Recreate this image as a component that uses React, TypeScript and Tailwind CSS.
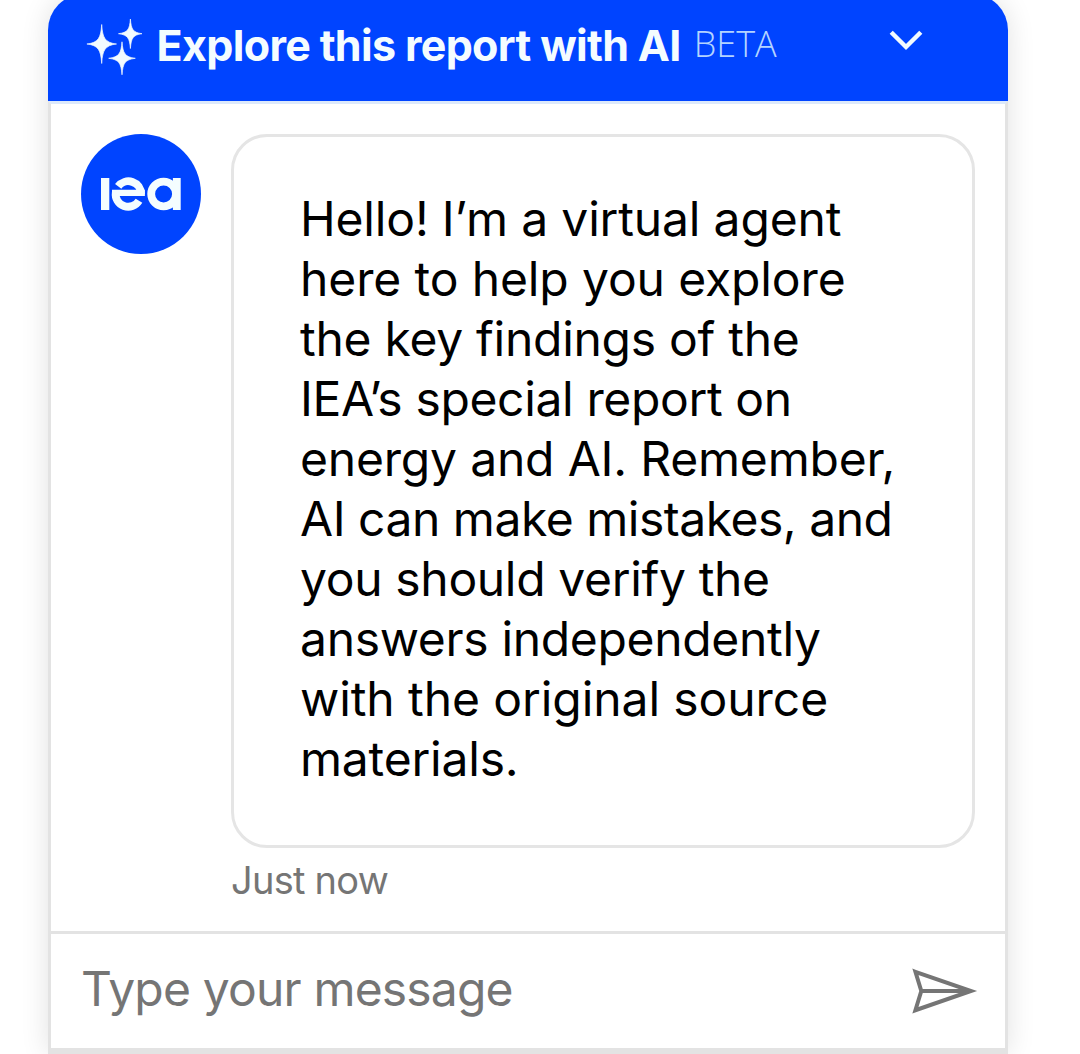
const messageLines = [
  { text: 'Hello! I’m a virtual agent', tracking: 'tracking-[-0.16px]' },
  { text: 'here to help you explore', tracking: 'tracking-[-0.12px]' },
  { text: 'the key findings of the', tracking: 'tracking-[-0.28px]' },
  { text: 'IEA’s special report on', tracking: 'tracking-[-0.36px]' },
  { text: 'energy and AI. Remember,', tracking: 'tracking-[-0.19px]' },
  { text: 'AI can make mistakes, and', tracking: 'tracking-[-0.48px]' },
  { text: 'you should verify the', tracking: 'tracking-[-0.34px]' },
  { text: 'answers independently', tracking: 'tracking-[-0.32px]' },
  { text: 'with the original source', tracking: 'tracking-[-0.08px]' },
  { text: 'materials.', tracking: 'tracking-[-0.2px]' },
];

function Sparkles() {
  return (
    <svg width="56" height="58" viewBox="86 17 56 58" fill="#f2fbff" aria-hidden="true">
      <g stroke="#f2fbff" strokeWidth="0.7">
        <path d="M101.7 24.5C102.6 38 105 42.6 116.5 44C105 45.4 102.6 50 101.7 63.5C100.8 50 98.4 45.4 86.9 44C98.4 42.6 100.8 38 101.7 24.5Z" />
        <path d="M130.4 19C131.2 29.5 133 32.5 142 33.7C133 34.9 131.2 38 130.4 48.5C129.6 38 127.8 34.9 118.5 33.7C127.8 32.5 129.6 29.5 130.4 19Z" />
        <path d="M122 41.8C122.9 53.5 125 57 135.3 58.3C125 59.6 122.9 63.1 122 74.8C121.1 63.1 119 59.6 108.7 58.3C119 57 121.1 53.5 122 41.8Z" />
      </g>
    </svg>
  );
}

function Chevron() {
  return (
    <svg width="34" height="22" viewBox="889 29 34 22" fill="none" aria-hidden="true">
      <path d="M891.2 32.2L906 47L920.8 32.2" stroke="#f2fbff" strokeWidth="4.4" />
    </svg>
  );
}

function Logo() {
  return (
    <div className="h-[120px] w-[120px] shrink-0 rounded-full bg-[#0044ff]">
      <svg width="120" height="120" viewBox="81 134 120 120" fill="none" aria-label="iea">
        <rect x="101" y="178" width="8.3" height="32" fill="#f4fdff" />
        <g stroke="#f4fdff" strokeWidth="7.8">
          <path d="M118.2 186.4A12.6 12.4 0 0 1 141 194" />
          <path d="M115.8 192.5A12.6 12.4 0 0 0 139 200.8" />
          <path d="M112 192.9H144.9" strokeWidth="6.2" />
          <circle cx="163.6" cy="194" r="12.4" />
          <path d="M176.8 178V210" />
        </g>
      </svg>
    </div>
  );
}

function SendIcon() {
  return (
    <svg width="66" height="46" viewBox="912 968 66 46" fill="none" aria-hidden="true">
      <path
        d="M915.4 971.8L971 991L915.4 1010.2L921.3 991Z M921.3 991H971"
        stroke="#757575"
        strokeWidth="4"
        strokeMiterlimit="10"
      />
    </svg>
  );
}

export default function App() {
  return (
    <div className="h-[1054px] w-[1080px] overflow-hidden bg-white font-['Inter',sans-serif]">
      <div className="mx-12 -mt-1.5 flex h-[1060px] w-[960px] flex-col rounded-t-[36px] shadow-[0_0_28px_rgba(0,0,0,0.12)]">
        <header className="flex h-[107px] shrink-0 items-start rounded-t-[36px] bg-[#0044ff] pt-[21px] pl-[38px]">
          <div className="mt-0.5">
            <Sparkles />
          </div>
          <h1 className="ml-[14.5px] text-[43px] leading-[60px] font-bold tracking-[-0.66px] whitespace-nowrap text-[#f4fcff]">
            Explore this report with AI
          </h1>
          <span className="ml-[13px] w-[84px] font-['Open_Sans',sans-serif] text-[36px] leading-[58px] font-light text-[#b4d4ff]">
            BETA
          </span>
          <button className="mt-3.5 mr-[85px] ml-auto" aria-label="Collapse">
            <Chevron />
          </button>
        </header>

        <main className="flex h-[830px] shrink-0 items-start gap-[30px] border-x-3 border-t-3 border-x-[#e3e3e3] border-t-[#dce9fb] bg-white pt-[30px] pl-[30px]">
          <Logo />
          <div>
            <div className="h-[714px] w-[744px] rounded-[36px] border-3 border-[#e5e5e5] pt-[52px] pl-[66px]">
              <p className="text-[48px] leading-[60px] text-black">
                {messageLines.map((line) => (
                  <span key={line.text} className={`block whitespace-nowrap ${line.tracking}`}>
                    {line.text}
                  </span>
                ))}
              </p>
            </div>
            <p className="mt-2 text-[38px] leading-[48px] tracking-[-0.75px] text-[#757575]">Just now</p>
          </div>
        </main>

        <footer className="flex h-[123px] shrink-0 items-start justify-between border-x-3 border-t-3 border-b-6 border-[#e3e3e3] bg-white pt-[25px] pr-[27px] pl-[30px]">
          <p className="text-[48px] leading-[60px] tracking-[-0.82px] text-[#757575]">Type your message</p>
          <button className="mt-[9px]" aria-label="Send">
            <SendIcon />
          </button>
        </footer>
      </div>
    </div>
  );
}
